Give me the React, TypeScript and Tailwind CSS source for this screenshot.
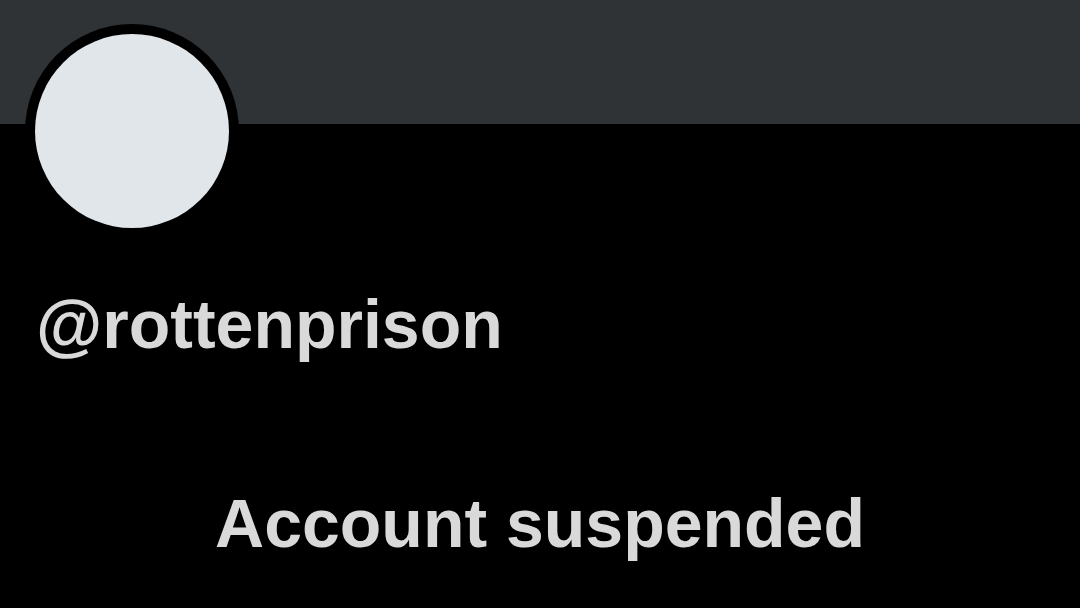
import React from 'react';

export default function App() {
  return (
    <div className="relative w-[1080px] h-[608px] overflow-hidden bg-black font-['Liberation_Sans',Arial,sans-serif]">
      <div className="h-[124px] bg-[#2f3336]" />
      <div className="absolute left-[25px] top-[24px] w-[214px] h-[214px] rounded-full bg-black p-[10px]">
        <div className="w-full h-full rounded-full bg-[#e1e6ea]" />
      </div>
      <div className="flex flex-col">
        <h1 className="mt-[166px] pl-[36px] text-[68px] leading-[68px] font-bold text-[#d9d9d9]">
          @rottenprison
        </h1>
        <p className="mt-[131px] text-center text-[68px] leading-[68px] font-bold text-[#d9d9d9]">
          Account suspended
        </p>
      </div>
    </div>
  );
}
